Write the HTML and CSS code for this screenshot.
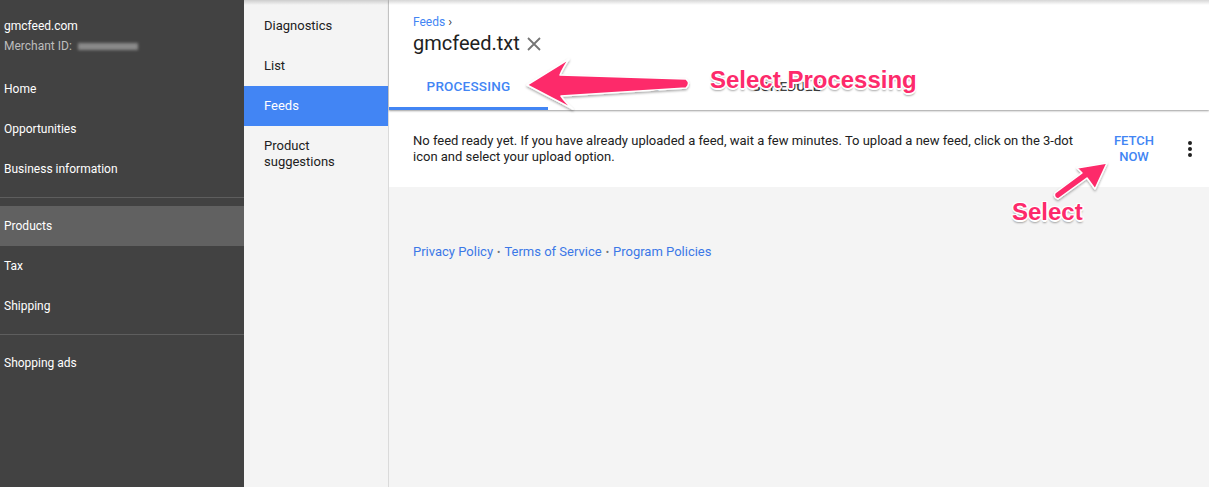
FILE: index.html
```html
<!DOCTYPE html>
<html>
<head>
<meta charset="utf-8">
<link rel="stylesheet" href="styles.css">
</head>
<body>
<div class="app">
  <aside class="sidebar">
    <div class="account">
      <div class="acct-name">gmcfeed.com</div>
      <div class="acct-id">Merchant ID: <span class="blur"></span></div>
    </div>
    <nav class="nav">
      <div class="nav-item">Home</div>
      <div class="nav-item">Opportunities</div>
      <div class="nav-item">Business information</div>
      <div class="nav-divider"></div>
      <div class="nav-item active">Products</div>
      <div class="nav-item">Tax</div>
      <div class="nav-item">Shipping</div>
      <div class="nav-divider"></div>
      <div class="nav-item">Shopping ads</div>
    </nav>
  </aside>
  <aside class="subnav">
    <div class="sub-item">Diagnostics</div>
    <div class="sub-item">List</div>
    <div class="sub-item active">Feeds</div>
    <div class="sub-item multi">Product<br>suggestions</div>
  </aside>
  <main class="main">
    <header class="header">
      <div class="crumb">Feeds <span class="chev">›</span></div>
      <div class="title-row">
        <h1 class="title">gmcfeed.txt</h1>
        <svg class="close" width="16" height="16" viewBox="0 0 16 16"><path d="M2 2 L14 14 M14 2 L2 14" stroke="#757575" stroke-width="1.8" fill="none"/></svg>
      </div>
      <div class="tabs">
        <div class="tab active">PROCESSING</div>
        <div class="tab">SETTINGS</div>
        <div class="tab">SCHEDULE</div>
      </div>
    </header>
    <section class="card">
      <p class="msg">No feed ready yet. If you have already uploaded a feed, wait a few minutes. To upload a new feed, click on the <span class="nowrap">3-dot</span> icon and select your upload option.</p>
      <div class="fetch">FETCH<br>NOW</div>
      <svg class="dots" width="24" height="24" viewBox="0 0 24 24"><circle cx="12" cy="6" r="2" fill="#212121"/><circle cx="12" cy="12" r="2" fill="#212121"/><circle cx="12" cy="18" r="2" fill="#212121"/></svg>
    </section>
    <footer class="footer">
      <a>Privacy Policy</a><span class="sep">•</span><a>Terms of Service</a><span class="sep">•</span><a>Program Policies</a>
    </footer>
  </main>
  <div class="topshade"></div>
  <svg class="annot" width="1209" height="487" viewBox="0 0 1209 487">
    <defs>
      <filter id="sh" x="-10%" y="-10%" width="120%" height="130%">
        <feDropShadow dx="0" dy="1.5" stdDeviation="1.2" flood-color="#000" flood-opacity="0.35"/>
      </filter>
    </defs>
    <path filter="url(#sh)" d="M527 85 L569 59 Q563 68 560 75 L686 79 Q691 83.5 686 88 L561 96 Q565 102 573 109 Z" fill="#fd2a6b" stroke="#fff" stroke-width="1.5" stroke-linejoin="round"/>
    <path filter="url(#sh)" d="M1107 163 L1095 189 Q1090 182 1087 178 L1058 199 Q1053 197 1055 193 L1082 173 Q1079 170 1077 168 Z" fill="#fd2a6b" stroke="#fff" stroke-width="1.5" stroke-linejoin="round"/>
  </svg>
  <div class="label label-1">Select Processing</div>
  <div class="label label-2">Select</div>
</div>
</body>
</html>
```
FILE: styles.css
```css
* { box-sizing: border-box; }
html, body { margin: 0; padding: 0; }
body {
  font-family: Roboto, "Noto Sans", Arial, sans-serif;
  width: 1209px;
  height: 487px;
  overflow: hidden;
  background: #f4f4f4;
}
.app {
  position: relative;
  display: flex;
  width: 1209px;
  height: 487px;
}
.sidebar {
  width: 244px;
  flex: none;
  background: #424242;
  color: #fff;
  font-size: 12px;
}
.account { padding: 16px 0 13px 4px; }
.acct-name { line-height: 20px; color: #fff; }
.acct-id { line-height: 20px; color: #bdbdbd; display: flex; align-items: center; }
.blur {
  display: inline-block;
  width: 60px;
  height: 7px;
  margin-left: 6px;
  background: #8a8a8a;
  filter: blur(1.5px);
}
.nav-item {
  height: 40px;
  line-height: 40px;
  padding-left: 4px;
  color: #fff;
}
.nav-item.active { background: #616161; }
.nav-divider {
  height: 1px;
  background: #5e5e5e;
  margin: 8px 0;
}
.subnav {
  width: 145px;
  flex: none;
  background: #f4f4f4;
  border-right: 1px solid #dadada;
  padding-top: 6px;
  font-size: 13px;
  color: #212121;
}
.sub-item {
  height: 40px;
  line-height: 40px;
  padding-left: 20px;
}
.sub-item.active { background: #4285f4; color: #fff; }
.sub-item.multi {
  height: auto;
  line-height: 16px;
  padding-top: 12px;
  padding-bottom: 12px;
}
.main {
  flex: 1;
  display: flex;
  flex-direction: column;
  background: #f4f4f4;
}
.header {
  background: #fff;
  height: 110px;
  padding-top: 15px;
  box-shadow: 0 1px 2px rgba(0,0,0,0.35);
  position: relative;
  z-index: 1;
}
.crumb {
  padding-left: 24px;
  font-size: 12px;
  line-height: 14px;
  color: #4285f4;
}
.chev { color: #424242; font-size: 13px; }
.title-row {
  display: flex;
  align-items: center;
  padding-left: 24px;
  margin-top: 2px;
  height: 24px;
}
.title {
  margin: 0;
  font-size: 20px;
  font-weight: 400;
  color: #212121;
  line-height: 24px;
}
.close { margin-left: 6px; margin-top: 1px; }
.tabs {
  display: flex;
  margin-top: 10px;
  height: 45px;
}
.tab {
  width: 159px;
  text-align: center;
  font-size: 13.5px;
  font-weight: 500;
  color: #424242;
  line-height: 42px;
  border-bottom: 3px solid transparent;
  letter-spacing: 0.2px;
}
.tab.active { color: #4285f4; border-bottom-color: #4285f4; }
.card {
  background: #fff;
  height: 76px;
  margin-top: 1px;
  display: flex;
  align-items: center;
  padding-left: 24px;
}
.msg {
  margin: 0;
  flex: 1;
  font-size: 13px;
  line-height: 16px;
  color: #212121;
  padding-right: 20px;
}
.nowrap { white-space: nowrap; }
.fetch {
  width: 64px;
  flex: none;
  text-align: center;
  font-size: 13px;
  font-weight: 500;
  line-height: 16px;
  color: #4285f4;
  margin-right: 12px;
}
.dots { margin-right: 7px; flex: none; }
.footer {
  padding: 57px 0 0 24px;
  font-size: 13px;
  line-height: 16px;
  color: #3b78e7;
}
.footer .sep { color: #757575; margin: 0 4px; font-size: 10px; }
.topshade {
  position: absolute;
  left: 244px;
  top: 0;
  right: 0;
  height: 5px;
  background: linear-gradient(rgba(0,0,0,0.16), rgba(0,0,0,0));
  z-index: 2;
}
.annot {
  position: absolute;
  left: 0;
  top: 0;
  z-index: 3;
}
.label {
  position: absolute;
  z-index: 4;
  font-family: "Liberation Sans", Arial, sans-serif;
  font-weight: 700;
  font-size: 24px;
  line-height: 28px;
  color: #fd2a6b;
  text-shadow:
    -1.5px 0 0 #fff, 1.5px 0 0 #fff, 0 -1.5px 0 #fff, 0 1.5px 0 #fff,
    -1px -1px 0 #fff, 1px -1px 0 #fff, -1px 1px 0 #fff, 1px 1px 0 #fff,
    0 2.5px 2px rgba(0,0,0,0.35);
}
.label-1 { left: 710px; top: 66px; }
.label-2 { left: 1012px; top: 198px; }
```
